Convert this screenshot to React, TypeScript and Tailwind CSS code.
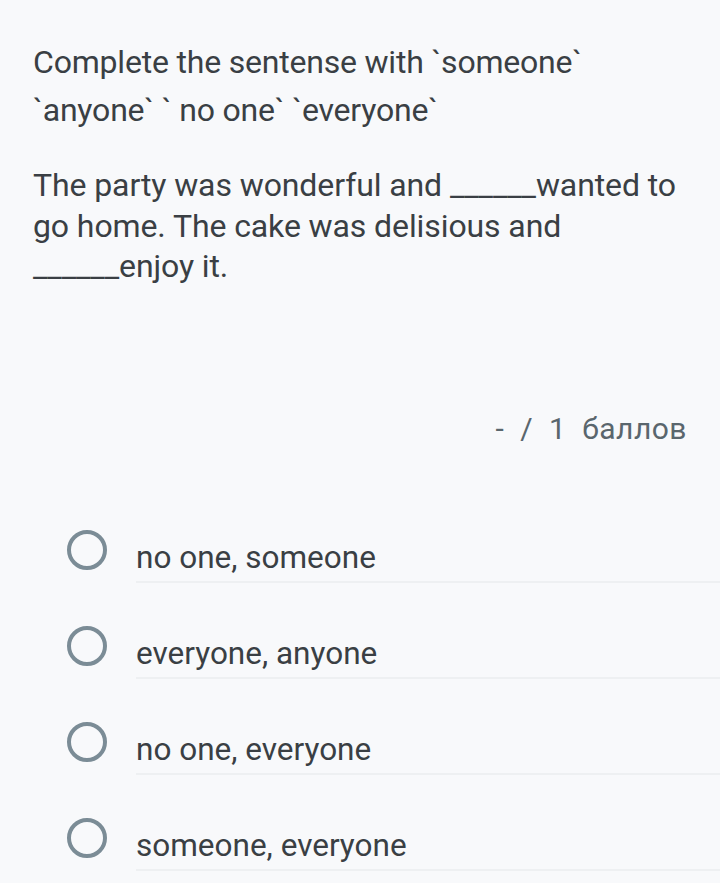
const options = ["no one, someone", "everyone, anyone", "no one, everyone", "someone, everyone"];

function Radio() {
  return (
    <div className="w-[40px] h-[40px] rounded-full border-[4px] border-[#7b8c96] shrink-0" />
  );
}

export default function App() {
  return (
    <div className="min-h-[883px] bg-[#f8f9fb] text-[#3a3f44] font-['Roboto',sans-serif] overflow-hidden">
      <div className="pt-[38px] px-[33px]">
        <p className="text-[32px] leading-[48px] tracking-[-0.2px]">
          Complete the sentense with `someone` `anyone` ` no one` `everyone`
        </p>
        <p className="mt-[31px] text-[32px] leading-[40.5px] tracking-[-0.1px]">
          The party was wonderful and ______wanted to go home. The cake was delisious and ______enjoy it.
        </p>
      </div>
      <div className="mt-[119px] pr-[33px] text-right text-[30px] text-[#5a666d] tracking-[0.5px]">
        -&nbsp; /&nbsp; 1&nbsp; баллов
      </div>
      <div className="mt-[51px]">
        {options.map((opt) => (
          <div key={opt} className="flex items-center h-[96px] pl-[67px]">
            <Radio />
            <div className="ml-[29px] flex-1 h-[49px] flex items-center border-b-[2px] border-[#eef0f2] self-end mb-[15px]">
              <span className="text-[31.5px] leading-none mt-[2px]">{opt}</span>
            </div>
          </div>
        ))}
      </div>
    </div>
  );
}
